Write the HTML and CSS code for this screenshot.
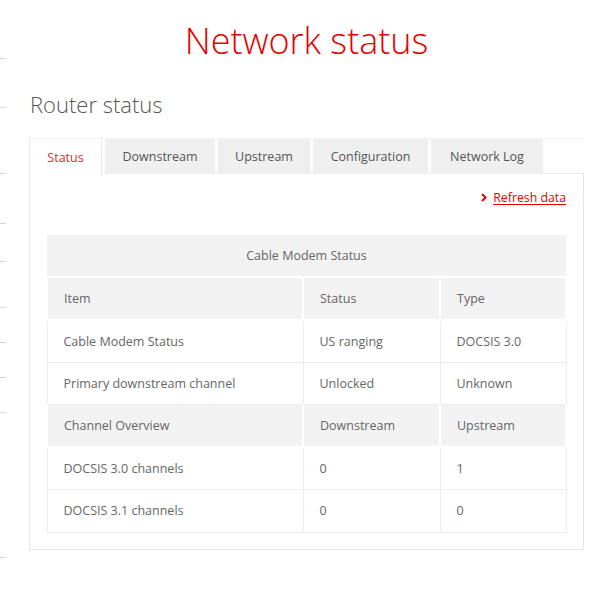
FILE: index.html
```html
<!DOCTYPE html>
<html lang="en">
<head>
<meta charset="utf-8">
<title>Network status</title>
<link rel="stylesheet" href="styles.css">
</head>
<body>
<div class="ticks" aria-hidden="true">
  <span style="top:58px"></span><span style="top:107px"></span><span style="top:173px"></span>
  <span style="top:223px"></span><span style="top:261px"></span><span style="top:307px"></span>
  <span style="top:342px"></span><span style="top:377px"></span><span style="top:412px"></span>
  <span style="top:557px"></span>
</div>
<main class="page">
  <h1 class="title">Network status</h1>
  <h2 class="subtitle">Router status</h2>
  <div class="tabs">
    <div class="tab active t-status">Status</div>
    <div class="tab t-down">Downstream</div>
    <div class="tab t-up">Upstream</div>
    <div class="tab t-conf">Configuration</div>
    <div class="tab t-log">Network Log</div>
  </div>
  <section class="panel">
    <div class="refresh">
      <svg class="chev" width="6" height="9" viewBox="0 0 6 9"><path d="M1 1 L4.5 4.5 L1 8" fill="none" stroke="#e60000" stroke-width="2"/></svg>
      <a href="#">Refresh data</a>
    </div>
    <table class="grid">
      <tr class="head"><th colspan="3" class="center">Cable Modem Status</th></tr>
      <tr class="head"><th>Item</th><th>Status</th><th>Type</th></tr>
      <tr><td>Cable Modem Status</td><td>US ranging</td><td>DOCSIS 3.0</td></tr>
      <tr><td>Primary downstream channel</td><td>Unlocked</td><td>Unknown</td></tr>
      <tr class="head"><th>Channel Overview</th><th>Downstream</th><th>Upstream</th></tr>
      <tr><td>DOCSIS 3.0 channels</td><td>0</td><td>1</td></tr>
      <tr><td>DOCSIS 3.1 channels</td><td>0</td><td>0</td></tr>
    </table>
  </section>
</main>
</body>
</html>
```
FILE: styles.css
```css
* { box-sizing: border-box; }
body {
  margin: 0;
  background: #fff;
  font-family: "Open Sans", "Liberation Sans", sans-serif;
  color: #666;
}
.ticks { position: absolute; left: 0; top: 0; width: 6px; height: 589px; }
.ticks span { position: absolute; left: 0; width: 6px; height: 1px; background: #d8d8d8; }
.page {
  width: 555px;
  margin-left: 29px;
  padding-top: 16px;
}
.title {
  margin: 0;
  text-align: center;
  font-size: 36px;
  font-weight: 300;
  color: #e60000;
  line-height: 50px;
}
.subtitle {
  margin: 23px 0 0 1px;
  font-size: 22px;
  font-weight: 300;
  color: #555;
  line-height: 30px;
}
.tabs {
  display: flex;
  gap: 3px;
  margin-top: 19px;
  border-top: 1px solid #f3f3f3;
  height: 36px;
}
.tab {
  height: 35px;
  display: flex;
  align-items: center;
  justify-content: center;
  font-size: 12.5px;
  color: #555;
  background: #efefef;
  white-space: nowrap;
}
.t-status { width: 73px; }
.t-down { width: 110px; }
.t-up { width: 92px; }
.t-conf { width: 115px; }
.t-log { width: 112px; }
.tab.active {
  background: #fff;
  color: #e8272b;
  border-left: 1px solid #e6e6e6;
  border-right: 1px solid #e6e6e6;
  height: 36px;
}
.panel {
  border: 1px solid #e6e6e6;
  border-top: 1px solid #ececec;
  margin-top: -1px;
  padding: 14px 16px 16px 16px;
}
.refresh {
  display: flex;
  justify-content: flex-end;
  align-items: center;
  gap: 6px;
  height: 18px;
  padding-right: 1px;
}
.refresh a {
  color: #e60000;
  font-size: 12.3px;
  text-decoration: underline;
  text-underline-offset: 2px;
}
.chev { display: block; }
.grid {
  width: 100%;
  margin-top: 29px;
  border-collapse: collapse;
  font-size: 12.5px;
  color: #666;
}
.grid th, .grid td {
  height: 42.5px;
  padding: 0 16px;
  text-align: left;
  font-weight: 400;
  border: 1px solid #ececec;
}
.grid tr.head th {
  background: #f2f2f2;
  border: 2px solid #fff;
  border-top-width: 0;
}
.grid tr.head:first-child th { height: 42px; border-bottom-width: 2px; }
.grid th.center { text-align: center; }
.grid tr:first-child th { border-left: 0; border-right: 0; }
.grid tr > :first-child { width: 256px; }
.grid tr > :nth-child(2) { width: 137px; }
```
